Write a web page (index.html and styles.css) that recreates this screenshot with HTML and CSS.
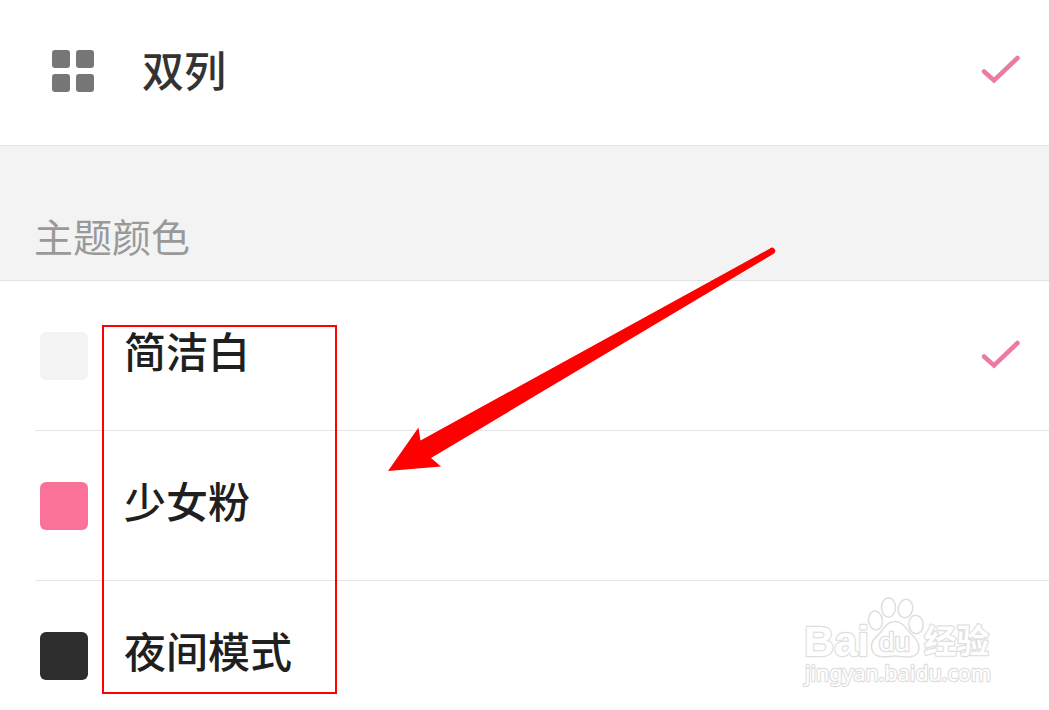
FILE: index.html
```html
<!DOCTYPE html>
<html lang="zh-CN">
<head>
<meta charset="utf-8">
<title>主题颜色</title>
<link rel="stylesheet" href="styles.css">
</head>
<body>
<main class="screen">
  <div class="row row-layout">
    <div class="grid-icon"><i></i><i></i><i></i><i></i></div>
    <span class="label label-layout">双列</span>
    <svg class="check" viewBox="0 0 40 30"><path d="M4 17.5 L14 26.5 L37.5 4"/></svg>
  </div>
  <h2 class="section">主题颜色</h2>
  <ul class="themes">
    <li class="row theme">
      <span class="swatch white"></span><span class="label">简洁白</span>
      <svg class="check check-theme" viewBox="0 0 40 30"><path d="M4 17.5 L14 26.5 L37.5 4"/></svg>
    </li>
    <li class="row theme"><span class="swatch pink"></span><span class="label">少女粉</span></li>
    <li class="row theme"><span class="swatch dark"></span><span class="label">夜间模式</span></li>
  </ul>
  <div class="highlight"></div>
  <svg class="overlay" viewBox="0 0 1049 710">
    <path class="arrow" d="M388 471 L418.5 427.5 L420.5 440.5 L770 248.5 A3.2 3.2 0 0 1 774 253.5 L431 458 L441 466.5 Z"/>
    <g class="watermark">
      <text class="wm-latin" x="804" y="656" font-size="43" textLength="65" lengthAdjust="spacingAndGlyphs">Bai</text>
      <ellipse cx="875.5" cy="620.5" rx="7" ry="9.5" transform="rotate(-8 875.5 620.5)"/>
      <ellipse cx="888.5" cy="607.5" rx="7" ry="9.7"/>
      <ellipse cx="905.5" cy="608.5" rx="7.2" ry="9.2" transform="rotate(12 905.5 608.5)"/>
      <ellipse cx="916" cy="624.5" rx="7.2" ry="9.2" transform="rotate(-5 916 624.5)"/>
      <path d="M895 621.5 C903 621.5 906 629 911 634 C917 639 921 645 918 652 C914 660 902 656 895 656 C888 656 877 660 872.5 651 C869 643 875 638 880 633 C884 628 887 621.5 895 621.5 Z"/>
      <text class="wm-du" x="879" y="651" font-size="25" textLength="31" lengthAdjust="spacingAndGlyphs">du</text>
      <text class="wm-cjk" x="924" y="653" font-size="33" textLength="65" lengthAdjust="spacingAndGlyphs">经验</text>
      <text class="wm-url" x="805" y="681" font-size="22" textLength="186" lengthAdjust="spacingAndGlyphs">jingyan.baidu.com</text>
    </g>
  </svg>
</main>
</body>
</html>
```
FILE: styles.css
```css
* { box-sizing: border-box; }
body { margin: 0; background: #fff; font-family: "Noto Sans CJK SC", sans-serif; }
.screen { position: relative; width: 1049px; height: 710px; overflow: hidden; }
.row { display: flex; align-items: flex-start; }
.row-layout { height: 146px; padding: 50px 29px 0 52px; border-bottom: 1px solid #e2e2e2; }
.grid-icon { display: grid; grid-template-columns: 18px 18px; grid-auto-rows: 18px; gap: 6px; }
.grid-icon i { background: #777; border-radius: 3px; }
.label { font-size: 42px; line-height: 48px; font-weight: 500; color: #1f1f1f; margin: -6px 0 0 36px; white-space: nowrap; }
.label-layout { margin: -5px 0 0 48px; color: #333; }
.check { width: 40px; height: 30px; margin: 4px 0 0 auto; }
.check-theme { margin-top: 7px; }
.check path { fill: none; stroke: #eb7ba4; stroke-width: 4.5; stroke-linecap: round; stroke-linejoin: miter; }
.section { margin: 0; height: 135px; padding: 65px 0 0 34px; background: #f3f3f3; border-bottom: 1px solid #e2e2e2; color: #999; font-size: 39px; line-height: 48px; font-weight: 400; }
.themes { margin: 0; padding: 0 0 0 35px; list-style: none; }
.theme { height: 150px; padding: 51px 29px 0 5px; border-bottom: 1px solid #e6e6e6; }
.swatch { width: 48px; height: 48px; border-radius: 6px; }
.white { background: #f3f3f3; }
.pink { background: #fb7299; }
.dark { background: #2d2d2d; }
.highlight { position: absolute; left: 102px; top: 325px; width: 235px; height: 369px; border: 2px solid #f00; }
.overlay { position: absolute; left: 0; top: 0; width: 1049px; height: 710px; }
.arrow { fill: #f00; }
.watermark { fill: #fff; stroke: #dedede; stroke-width: 1.5; stroke-linejoin: round; }
.watermark text { paint-order: stroke; stroke-width: 2.4; }
.wm-latin, .wm-du { font-family: "Liberation Sans", sans-serif; font-weight: 700; }
.watermark .wm-du { font-weight: 400; }
.wm-cjk { font-family: "Noto Sans CJK SC", sans-serif; font-weight: 700; }
.wm-url { font-family: "Noto Sans", sans-serif; }
```
